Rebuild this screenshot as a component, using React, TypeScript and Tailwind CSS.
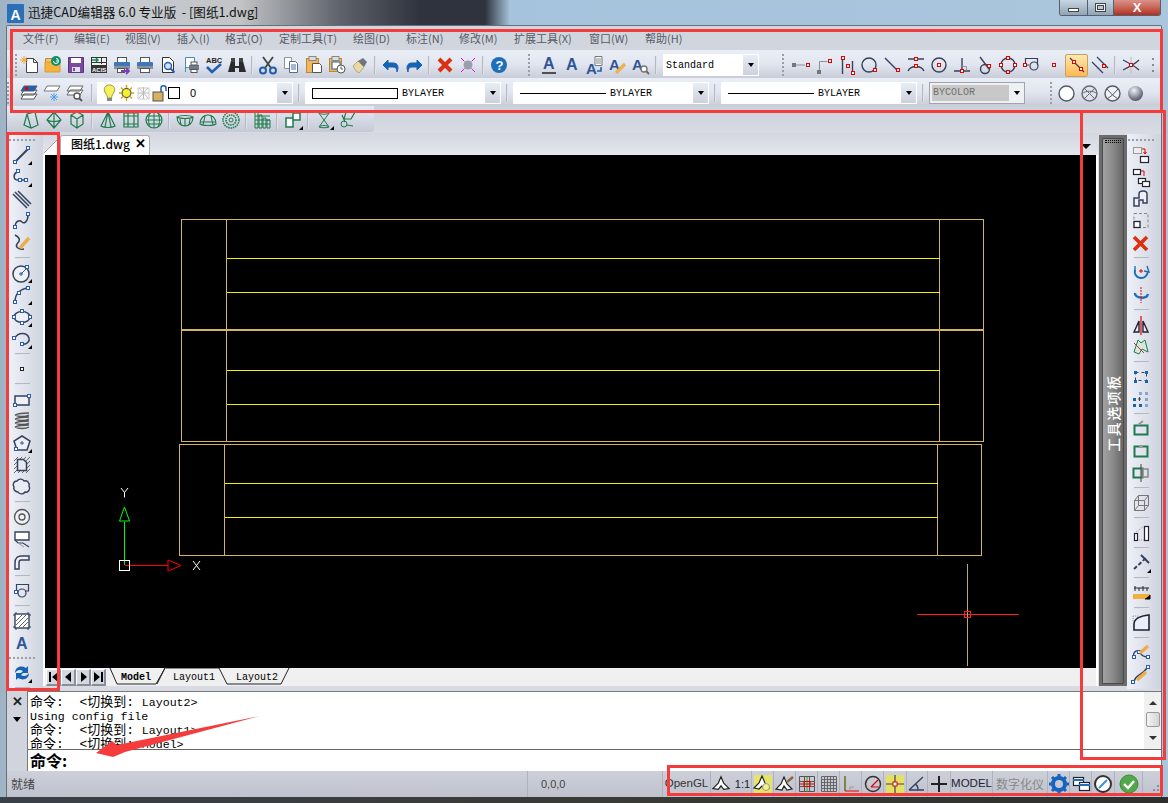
import type { ReactNode } from 'react';

const D = '#34425e';
const G = '#1f7a4d';
const R = '#e00000';
const B = '#2a5fa8';

// snap / grip node
const N = ({ x, y, c = R }: { x: number; y: number; c?: string }) => (
  <rect x={x + 0.5} y={y + 0.5} width="3" height="3" fill="#fff" stroke={c} />
);
const Fly = () => <path d="M20 16v4h-4z" fill="#000" />;

const A = ({ x = 4, y = 15, size = 15, c = '#2f5597' }: { x?: number; y?: number; size?: number; c?: string }) => (
  <text x={x} y={y} fontSize={size} fontWeight="700" fontFamily="'Liberation Sans', sans-serif" fill={c}>A</text>
);

const icons: Record<string, ReactNode> = {
  // standard toolbar
  new: (<><path d="M6.500 3.500h7l4 4v10h-11z" fill="#fff" stroke="#444" /><path d="M13.500 3.500v4h4" stroke="#444" /><path d="M4 1v8M0 5h8M1.500 2.500l5 5M6.500 2.500l-5 5" stroke="#f7a530" /></>),
  open: (<><path d="M2.500 3.500h7v4h-7z" fill="#f9c663" stroke="#c28a2c" /><path d="M2 7h15v10H2z" fill="#f7b23b" stroke="#d39b3f" /><circle cx="13" cy="6" r="5" fill="#0e8f6b" /><path d="M10.500 6a2.500 2.500 0 1 0 2.500-2.500M13 6l2 0" stroke="#fff" /></>),
  save: (<><path d="M2.500 2.500h15v15h-15z" fill="#7a4b9c" stroke="#5e3482" /><rect x="5" y="3" width="10" height="5" fill="#fff" /><rect x="6" y="12" width="8" height="5" fill="#e6dff0" /><rect x="7" y="13" width="2" height="3" fill="#7a4b9c" /></>),
  acis: (<><rect x="2.500" y="2.500" width="15" height="15" fill="#eef0ee" stroke="#333" /><path d="M2 7.500h15M12.500 2v7M7.500 2v6" stroke="#333" /><path d="M3 5h6M7 3l2 2-2 2" stroke="#138a55" strokeWidth="1.4" /><rect x="2" y="10" width="16" height="8" fill="#333" /><text x="3" y="16.500" fontSize="6" fontWeight="700" fill="#fff" fontFamily="'Liberation Sans', sans-serif">ACIS</text></>),
  printA: (<><rect x="5.500" y="2.500" width="9" height="5" fill="#fff" stroke="#555" /><rect x="2" y="7" width="16" height="7" rx="1" fill="#3f78b8" /><rect x="2" y="11" width="16" height="3" fill="#8a929e" /><rect x="5.500" y="13.500" width="7" height="4" fill="#fff" stroke="#555" /><path d="M9 16h8M14 13l3 3-3 3" stroke="#7a3fb0" strokeWidth="1.8" /></>),
  print: (<><rect x="5.500" y="2.500" width="9" height="5" fill="#fff" stroke="#555" /><rect x="2" y="7" width="16" height="7" rx="1" fill="#3f78b8" /><rect x="2" y="11" width="16" height="3" fill="#8a929e" /><rect x="5.500" y="13.500" width="9" height="4" fill="#fff" stroke="#555" /></>),
  preview: (<><path d="M4.500 2.500h7l4 4v11h-11z" fill="#fff" stroke="#333" /><circle cx="10" cy="11" r="3.500" fill="#cfe2f5" stroke="#2a5fa8" strokeWidth="1.4" /><path d="M12.500 13.500l4 4" stroke="#2a5fa8" strokeWidth="2" /></>),
  pageprint: (<><path d="M4.500 2.500h9v10h-9z" fill="#fff" stroke="#3f8fc0" /><path d="M4.500 6v11" stroke="#3f8fc0" /><rect x="8" y="10" width="10" height="5" fill="#6f7a8a" /><rect x="10" y="7" width="6" height="3" fill="#fff" stroke="#555" /><rect x="10" y="14.500" width="6" height="3" fill="#fff" stroke="#555" /></>),
  abc: (<><text x="2" y="8" fontSize="7.500" fontWeight="700" fill="#222" fontFamily="'Liberation Sans', sans-serif">ABC</text><path d="M3 12l5 5 9-8" stroke="#1f5fae" strokeWidth="2.600" /></>),
  binoc: (<><path d="M4 6h4v5h4V6h4l3 11h-7v-4H8v4H1z" fill="#2b2b2b" /><rect x="4" y="3" width="4" height="4" fill="#444" /><rect x="12" y="3" width="4" height="4" fill="#444" /></>),
  cut: (<><path d="M5 2l8 11M15 2L7 13" stroke="#444" strokeWidth="1.8" /><circle cx="5" cy="15.500" r="3" stroke="#1f5fae" strokeWidth="2" /><circle cx="15" cy="15.500" r="3" stroke="#1f5fae" strokeWidth="2" /></>),
  copy: (<><path d="M3.500 2.500h7v11h-7z" fill="#fff" stroke="#8a94a6" /><path d="M8.500 6.500h6l2 2v9h-8z" fill="#fff" stroke="#5a6a88" /><path d="M10 10h5M10 12h5M10 14h5" stroke="#3f70b0" /></>),
  paste: (<><rect x="2.500" y="3.500" width="12" height="14" fill="#f2b75a" stroke="#b8893a" /><rect x="5" y="1.500" width="7" height="4" fill="#ddd" stroke="#888" /><path d="M8.500 8.500h7l2 2v7h-9z" fill="#fff" stroke="#555" /></>),
  pastes: (<><rect x="2.500" y="3.500" width="12" height="13" fill="#f2b75a" stroke="#b8893a" /><rect x="5" y="1.500" width="7" height="4" fill="#ddd" stroke="#888" /><rect x="5" y="7" width="8" height="7" fill="#fff" stroke="#2a5fa8" /><circle cx="14" cy="14" r="4" fill="#fff" stroke="#555" /><path d="M14 11.500V14h2" stroke="#555" /></>),
  brush: (<><path d="M3 11l5-5 6 6-5 6-3-2z" fill="#e9d9a8" stroke="#b8a878" /><path d="M8 6l5-3 4 4-3 5z" fill="#6f7680" /></>),
  undo: (<path d="M7 5L2 10l5 5v-3h5c3 0 4 2 4 5 2-5 1-9-4-9H7z" fill="#1763b3" stroke="#1763b3" />),
  redo: (<path d="M13 5l5 5-5 5v-3H8c-3 0-4 2-4 5-2-5-1-9 4-9h5z" fill="#1763b3" stroke="#1763b3" />),
  del: (<path d="M4 4l12 12M16 4L4 16" stroke="#dd3010" strokeWidth="4" />),
  pink: (<><path d="M5 5l10 10M15 5L5 15" stroke="#f000f0" strokeDasharray="2 1" /><circle cx="10" cy="10" r="4.500" fill="#9aa0ab" /><path d="M3 3l2 2M17 3l-2 2M3 17l2-2M17 17l-2-2" stroke="#f000f0" /></>),
  help: (<><circle cx="10" cy="10" r="8" fill="#1f6fb8" /><text x="6.400" y="15" fontSize="13" fontWeight="700" fill="#fff" fontFamily="'Liberation Sans', sans-serif">?</text></>),
  // text toolbar
  t1: (<><A x={4} y={14} size={16} /><path d="M3 18h14" stroke="#222" strokeWidth="1.4" /></>),
  t2: (<A x={4} y={15} size={16} />),
  t3: (<><A x={1} y={19} size={15} /><path d="M10 1.500h7v9h-7z" fill="#fff" stroke="#777" /><path d="M11 4h5M11 6h5M11 8h5" stroke="#888" /><path d="M16 12v4h-4" stroke="#1f5fae" strokeWidth="1.600" /></>),
  t4: (<><A x={1} y={15} size={15} /><path d="M8 18l9-9" stroke="#eeb050" strokeWidth="3.400" /></>),
  t5: (<><A x={1} y={15} size={15} /><circle cx="13" cy="14" r="3" fill="#fff" stroke="#777" strokeWidth="1.4" /><path d="M15 16l3 3" stroke="#666" strokeWidth="1.8" /></>),
  // osnap toolbar
  s1: (<><path d="M3 10h11" stroke="#8a8f98" /><rect x="1" y="8" width="4" height="4" fill="#777" /><N x={15} y={8} /></>),
  s2: (<><path d="M5.500 16V6.500h8" stroke="#8a8f98" /><rect x="3" y="15" width="4" height="4" fill="#777" /><N x={14} y={4} /></>),
  s3: (<><path d="M5.500 4v15M15.500 6v13" stroke={D} strokeWidth="1.4" /><N x={4} y={1} /><N x={9} y={9} /><N x={14} y={16} /></>),
  s4: (<><circle cx="9" cy="10" r="7" stroke={D} strokeWidth="1.4" /><N x={13} y={13} /></>),
  s5: (<><path d="M2 3l12 12" stroke={D} strokeWidth="1.4" /><N x={13} y={13} /></>),
  s6: (<><path d="M2 4h16M2 16c3-6 13-6 16 0" stroke={D} strokeWidth="1.4" /><N x={8} y={2} /><N x={8} y={9} /></>),
  s7: (<><circle cx="10" cy="10" r="7" stroke={D} strokeWidth="1.4" /><N x={8} y={8} /></>),
  s8: (<><path d="M2 16h16M10 3v13" stroke={D} strokeWidth="1.4" /><path d="M10.500 11.500h4v4" stroke="#999" /><N x={8} y={14} /></>),
  s9: (<><path d="M5 2l9 12" stroke={D} strokeWidth="1.4" /><circle cx="10" cy="14" r="4.500" stroke={D} strokeWidth="1.4" /><N x={12} y={9} /></>),
  s10: (<><circle cx="10" cy="10" r="7" stroke={D} strokeWidth="1.4" /><N x={8} y={1} /><N x={8} y={15} /><N x={1} y={8} /><N x={15} y={8} /></>),
  s11: (<><path d="M4.500 10V3.500h12V10M4.500 10H8" stroke={D} strokeWidth="1.2" /><circle cx="13" cy="11" r="4" stroke={D} strokeWidth="1.2" /><N x={2} y={8} /></>),
  s12: (<N x={8} y={8} />),
  s13: (<><path d="M3 3l14 14" stroke={D} strokeWidth="1.2" /><N x={5} y={5} /><N x={12} y={12} /></>),
  s14: (<><path d="M2 7l11 11M7 2l11 11" stroke={D} strokeWidth="1.3" /><N x={12} y={9} /></>),
  s15: (<><path d="M2 5c4 2 12 6 16 10M2 15c4-2 12-6 16-10" stroke={D} strokeWidth="1.3" /><path d="M10 2v16" stroke="#bbb" /><N x={8} y={8} /></>),
  s16: (<path d="M9 3v2M9 9v2M9 15v2" stroke="#333" />),
  // layer buttons
  l1: (<><path d="M5 3h13l-3 5H2zM5 7h13l-3 5H2zM5 11h13l-3 5H2z" fill="#fff" stroke="#555" /><path d="M5 3h13l-3 5H2z" fill="#2a5fa8" /><rect x="6" y="4" width="3" height="3" fill={R} /></>),
  l2: (<><path d="M5 3h13l-3 5H2z" fill="#fff" stroke="#777" /><path d="M12 10v8M8 14h8M9 11l6 6M15 11l-6 6" stroke="#4fa0e8" /></>),
  l3: (<><path d="M5 3h13l-3 5H2zM5 7h13l-3 5H2z" fill="#fff" stroke="#666" /><circle cx="12" cy="13" r="3" fill="#fff" stroke="#555" strokeWidth="1.4" /><path d="M14 15l3 3" stroke="#555" strokeWidth="1.8" /></>),
  // 3d toolbar
  d1: (<path d="M3 15l3-11 8-2 3 13-7 3zM6 4l4 14" stroke={G} strokeWidth="1.2" />),
  d2: (<path d="M10 2l7 8-7 8-7-8zM3 10c3 2 11 2 14 0M10 2v16" stroke={G} strokeWidth="1.2" />),
  d3: (<path d="M10 2l6 3v9l-6 4-6-4V5zM4 5l6 4 6-4M10 9v9" stroke={G} strokeWidth="1.2" />),
  d4: (<path d="M10 2l7 14c-3 2-11 2-14 0zM10 2l-3 15M10 2l3 15" stroke={G} strokeWidth="1.2" />),
  d5: (<path d="M3 3h14v14H3zM3 6h14M3 14h14M7 3v14M13 3v14" stroke={G} strokeWidth="1.2" />),
  d6: (<><circle cx="10" cy="10" r="8" stroke={G} strokeWidth="1.2" /><path d="M2 10h16M3 6h14M3 14h14M10 2v16M6 3c-2 4-2 10 0 14M14 3c2 4 2 10 0 14" stroke={G} /></>),
  d7: (<path d="M2 7c3-2 13-2 16 0 0 6-4 9-8 9s-8-3-8-9zM2 7c3 2 13 2 16 0M6 15l-1-6M14 15l1-6M10 16V9" stroke={G} strokeWidth="1.1" />),
  d8: (<path d="M2 14c0-6 4-9 8-9s8 3 8 9c-3 2-13 2-16 0zM2 12h16M7 6l-2 9M13 6l2 9" stroke={G} strokeWidth="1.1" />),
  d9: (<><circle cx="10" cy="10" r="8" stroke={G} strokeWidth="1.6" strokeDasharray="1.5 0.8" /><circle cx="10" cy="10" r="5" stroke={G} strokeWidth="1.6" strokeDasharray="1.5 0.8" /><circle cx="10" cy="10" r="2" stroke={G} /></>),
  d10: (<path d="M3 2h3v16H3zM7 5h3v13H7zM11 8h3v10h-3zM15 10h3v8h-3zM3 6h15M3 10h15M3 14h15" stroke={G} />),
  d11: (<><path d="M3 8h7v9H3zM10 3h7v7h-7z" fill="#fff" stroke={G} strokeWidth="1.5" /><Fly /></>),
  d12: (<><path d="M4 2c2 3 10 3 12 0M4 2c2-1 10-1 12 0M5 17c2-2 8-2 10 0M5 17c2 1 8 1 10 0M4 2l6 8 6-8M5 17l5-7 5 7" stroke={G} /><Fly /></>),
  d13: (<><path d="M9 2h9l-4 7H7zM5 5l3 7" stroke={G} strokeWidth="1.2" /><circle cx="7" cy="14" r="3" stroke={G} /><path d="M10 15l6 1" stroke={G} /></>),
  // draw toolbar
  line: (<><path d="M3 17L16 4" stroke={D} strokeWidth="2" /><N x={1} y={15} c={B} /><N x={14} y={1} c={B} /><Fly /></>),
  pline: (<><path d="M5 5C1 7 1 13 6 13h9" stroke={D} strokeWidth="1.5" /><N x={4} y={2} c={B} /><N x={6} y={11} c={B} /><N x={12} y={11} c={B} /><Fly /></>),
  mline: (<path d="M3 3l14 14M6 2l13 13M1 5l14 14" stroke={D} strokeWidth="1.5" />),
  spline: (<><path d="M3 17c0-8 5-8 7-6s6 0 6-7" stroke={D} strokeWidth="1.5" /><N x={1} y={14} c={B} /><N x={14} y={1} c={B} /></>),
  sketch: (<><path d="M3 2c6 3 5 6 2 9-2 3 2 6 7 5" stroke={D} strokeWidth="1.5" /><path d="M8 15l9-10" stroke="#eeac4c" strokeWidth="3.400" /></>),
  circle: (<><circle cx="9" cy="11" r="8" fill="#eef0f5" stroke={D} strokeWidth="1.5" /><path d="M9 11l6-6" stroke={B} /><path d="M7 11h4M9 9v4" stroke={B} /><N x={13} y={2} c={B} /><Fly /></>),
  arc: (<><path d="M3 17C3 9 8 4 16 3" stroke={D} strokeWidth="1.5" /><N x={1} y={15} c={B} /><N x={5} y={6} c={B} /><N x={14} y={1} c={B} /><Fly /></>),
  ellipse: (<><ellipse cx="10" cy="10" rx="8" ry="5.500" fill="#eef0f5" stroke={D} strokeWidth="1.5" /><N x={8} y={2} c={B} /><N x={0} y={8} c={B} /><N x={16} y={8} c={B} /><N x={8} y={14} c={B} /><Fly /></>),
  earc: (<><path d="M3 9c3-6 12-6 14 0 1 3-2 7-7 6" stroke={D} strokeWidth="1.5" /><N x={0} y={7} c={B} /><N x={8} y={13} c={B} /><Fly /></>),
  point: (<rect x="8.500" y="8.500" width="3" height="3" fill="#fff" stroke="#222" strokeWidth="1" />),
  rect: (<><path d="M3 7h14v9H3z" fill="#eef0f5" stroke={D} strokeWidth="1.5" /><N x={1} y={14} c={B} /><N x={15} y={5} c={B} /></>),
  helix: (<path d="M3 4c4-2 11-2 14-2M3 4c3 2 11 2 14 0M3 8c4-2 11-2 14-2M3 8c3 2 11 2 14 0M3 12c4-2 11-2 14-2M3 12c3 2 11 2 14 0M3 16c4-2 11-2 14-2M3 16c3 2 11 2 14 0" stroke="#555" strokeWidth="1.3" />),
  poly: (<><path d="M10 3l8 5-3 9H5L2 8z" fill="#eef0f5" stroke={D} strokeWidth="1.5" /><path d="M8 10h4M10 8v4" stroke={B} /><N x={2} y={14} c={B} /><Fly /></>),
  hatchb: (<><path d="M2 6l4-4M2 10l8-8M2 14L14 2M2 18L18 2M6 18L18 6M10 18l8-8M14 18l4-4" stroke="#666" /><path d="M5.500 4.500h6l3 3v8h-9z" fill="#e6e9f2" stroke={D} strokeWidth="1.5" /></>),
  cloud: (<path d="M5 4c2-3 6-2 7 0 3-1 6 2 5 5 2 3-1 7-4 6-2 3-6 2-7 0-3 0-5-3-4-5-2-3 0-6 3-6z" fill="#e8ecf4" stroke={D} strokeWidth="1.4" />),
  donut: (<><circle cx="10" cy="10" r="7.500" fill="#eef0f5" stroke="#555" strokeWidth="1.3" /><circle cx="10" cy="10" r="3" stroke="#555" strokeWidth="1.3" /></>),
  leader: (<><path d="M3 3h14v8H3z" fill="#fff" stroke={D} strokeWidth="1.4" /><path d="M3 11l3 3h5l6 4" stroke={D} strokeWidth="1.2" /><path d="M6 14l6 4" stroke="#999" /></>),
  wall: (<path d="M3 18v-6c0-5 3-7 6-7h8v4H9c-1 0-2 1-2 3v6z" fill="#eef0f5" stroke={D} strokeWidth="1.5" />),
  region: (<><path d="M4.500 9V3.500h12V10H13" stroke={D} strokeWidth="1.2" /><circle cx="10" cy="12" r="4" stroke={D} strokeWidth="1.2" /><N x={2} y={9} c={B} /></>),
  hatch: (<><rect x="3" y="3" width="14" height="14" fill="#fff" stroke={D} strokeWidth="1.4" /><path d="M1 4h2M17 4h2M1 16h2M17 16h2M4 1v2M16 1v2M4 17v2M16 17v2" stroke={D} /><path d="M4 14L14 4M4 10l6-6M7 16l9-9M11 16l5-5" stroke="#666" /></>),
  atext: (<A x={4} y={16} size={16} />),
  sync: (<><path d="M3 10c0-6 6-8 11-5l2-2v7h-7l2-2c-3-2-6-1-8 2zM17 10c0 6-6 8-11 5l-2 2v-7h7l-2 2c3 2 6 1 8-2z" fill="#1763b3" /><Fly /></>),
  // modify toolbar
  m1: (<><rect x="2.500" y="2.500" width="8" height="6" fill="#eee" stroke="#999" /><rect x="9.500" y="11.500" width="8" height="6" fill="#fff" stroke="#223" strokeWidth="1.2" /><path d="M11 4h3v5M12.500 7l1.500 2 1.500-2" stroke={R} /></>),
  m2: (<><rect x="2.500" y="2.500" width="7" height="5" fill="#fff" stroke="#223" strokeWidth="1.2" /><rect x="7.500" y="11.500" width="7" height="5" fill="#fff" stroke="#223" strokeWidth="1.2" /><rect x="11.500" y="14.500" width="7" height="5" fill="#fff" stroke="#223" strokeWidth="1.2" /><path d="M10 4h3v5" stroke={R} /></>),
  m3: (<path d="M3 17V9h5V5c0-4 8-4 8 0v9h-4v-3H8v6z" fill="#eef0f5" stroke={D} strokeWidth="1.5" />),
  m4: (<><rect x="3" y="2.500" width="14" height="14" stroke="#888" strokeDasharray="3 2" /><rect x="3" y="10.500" width="6" height="6" fill="#fff" stroke="#223" strokeWidth="1.3" /></>),
  m5: (<path d="M3 4l13 13M16 4L3 17" stroke="#dd3010" strokeWidth="3.600" />),
  m6: (<><path d="M4 7c-2 8 10 12 13 2" stroke="#1f6fb8" strokeWidth="2" /><path d="M4 3v5M16 3l2 6-5-1" stroke="#1f6fb8" strokeWidth="1.4" /><path d="M8 8h4M10 6v4" stroke={R} /></>),
  m7: (<><path d="M4 8c-1 5 12 7 13 1" stroke="#1f6fb8" strokeWidth="2.400" /><path d="M10 2v16" stroke={R} strokeDasharray="2 1" /></>),
  m8: (<><path d="M3 17L8 6v11zM17 17l-5-11v11z" fill="#eef0f5" stroke="#223" strokeWidth="1.4" /><path d="M10 1v19" stroke={R} strokeWidth="1.2" /></>),
  m9: (<><path d="M3 15L7 3l3 3 4-3 3 12-6-3-3 5z" fill="#d8e8dc" stroke={G} /><path d="M3 6l10 10" stroke="#c03040" /></>),
  m10: (<><rect x="4.500" y="5.500" width="11" height="8" stroke="#444" strokeDasharray="3 3" /><rect x="3" y="4" width="3" height="3" fill="#1763b3" /><rect x="14" y="4" width="3" height="3" fill="#1763b3" /><rect x="3" y="13" width="3" height="3" fill="#1763b3" /><rect x="14" y="13" width="3" height="3" fill="#1763b3" /></>),
  m11: (<><rect x="2" y="9" width="3" height="3" fill="#1763b3" /><rect x="8" y="3" width="3" height="3" fill="#7fa8d8" /><rect x="14" y="3" width="3" height="3" fill="#7fa8d8" /><rect x="2" y="15" width="3" height="3" fill="#1763b3" /><rect x="8" y="15" width="3" height="3" fill="#1763b3" /><rect x="14" y="9" width="3" height="3" fill="#7fa8d8" /><rect x="14" y="15" width="3" height="3" fill="#7fa8d8" /><path d="M7 10h3M8.500 8v4" stroke="#444" /></>),
  m12: (<><rect x="3.500" y="6.500" width="13" height="9" stroke={G} strokeWidth="2" /><path d="M7 6l5-4" stroke="#999" strokeWidth="2" /></>),
  m13: (<><rect x="3.500" y="5.500" width="13" height="10" stroke={G} strokeWidth="2" /><rect x="8" y="4" width="4" height="3" fill="#999" /></>),
  m14: (<><rect x="2.500" y="5.500" width="9" height="9" stroke={G} strokeWidth="2" /><rect x="11" y="6" width="6" height="8" stroke="#888" strokeWidth="1.5" /><path d="M10 1v18" stroke="#444" /></>),
  m15: (<path d="M3.500 7.500h10v10h-10zM7.500 2.500h10v10h-10zM3.500 7.500l4-5M13.500 7.500l4-5M13.500 17.500l4-5M3.500 17.500l4-5" stroke="#777" />),
  m16: (<><rect x="3.500" y="10.500" width="3" height="7" fill="#fff" stroke="#223" strokeWidth="1.2" /><rect x="13.500" y="3.500" width="4" height="14" fill="#fff" stroke="#223" strokeWidth="1.2" /><path d="M5 9l8-6" stroke="#999" strokeDasharray="1 1" /><path d="M8 17h5" stroke="#999" strokeDasharray="1 1" /></>),
  m17: (<><path d="M3 16L16 4" stroke={D} strokeWidth="2" strokeDasharray="4 2" /><path d="M10 2l8 8" stroke={D} strokeWidth="2" /><Fly /></>),
  m18: (<><path d="M4 3v5M8 5v3M12 3v5M16 5v3M3 5h15" stroke="#223" /><rect x="2" y="11" width="17" height="5" fill="#f0b040" /><path d="M14 16h5v-4" fill="#000" stroke="#000" /></>),
  m19: (<><path d="M3 17V11C3 6 9 3 18 2v15z" fill="#e8f1fa" stroke="#223" strokeWidth="1.600" /><path d="M2 3h6M2 3v6" stroke="#999" strokeDasharray="1 1" /></>),
  m20: (<><path d="M3 14C1 8 8 6 9 9c1 3 3 5 8 5" stroke={D} strokeWidth="1.3" /><N x={1} y={12} c={B} /><N x={6} y={7} c={B} /><N x={15} y={12} c={B} /><path d="M9 10l8-7" stroke="#eeac4c" strokeWidth="3.400" /></>),
  m21: (<><path d="M3 17C4 9 11 11 16 3" stroke={D} strokeWidth="1.5" /><N x={0} y={15} c={B} /><N x={15} y={0} c={B} /><path d="M6 15l9-8" stroke="#eeac4c" strokeWidth="3.400" /></>),
  // status bar
  ucs: (<path d="M10 2l3 7 6 6-6 1-3-4-3 4-6-1 6-6z" fill="#fff" stroke="#222" strokeWidth="1.3" />),
  ucsL: (<><rect x="1" y="1" width="18" height="18" fill="#e4e46a" /><path d="M9 2l3 7 4 5-5 1-2-3-3 3-5-1 5-5z" fill="#fff" stroke="#222" strokeWidth="1.2" /><circle cx="13" cy="13" r="3.500" fill="#f6f08a" stroke="#999" /></>),
  ucsP: (<><path d="M9 3l3 7 5 5-5 1-3-4-2 4-6-1 5-5z" fill="#fff" stroke="#222" strokeWidth="1.2" /><path d="M12 8l6-5" stroke="#8a6a3a" strokeWidth="2.400" /></>),
  snapg: (<><path d="M2.500 2.500h15v15h-15zM2.500 7.500h15M2.500 12.500h15M7.500 2.500v15M12.500 2.500v15" stroke="#555" /><path d="M10 3v15" stroke="#2a2" /><path d="M2 10h16" stroke={R} /><rect x="7" y="7.500" width="6" height="5" stroke={R} /></>),
  grid: (<path d="M2.500 2.500h15v15h-15zM2.500 5.500h15M2.500 8.500h15M2.500 11.500h15M2.500 14.500h15M5.500 2.500v15M8.500 2.500v15M11.500 2.500v15M14.500 2.500v15" stroke="#666" />),
  ortho: (<><path d="M4 2v15h14" stroke={R} /><path d="M4 2v15" stroke="#2a2" /><path d="M9 13v4M9 13h4" stroke="#999" /></>),
  polar: (<><circle cx="10" cy="10" r="7.500" stroke="#333" strokeWidth="1.5" /><path d="M8 13l7-7M8 13h8" stroke={R} strokeWidth="1.2" /></>),
  otrack: (<><rect x="1" y="1" width="18" height="18" fill="#e3e064" /><path d="M1 10h18M10 1v18" stroke={D} strokeWidth="1.2" /><rect x="8" y="8" width="4" height="4" fill="#fff" stroke={R} /></>),
  angle: (<path d="M2 16L16 3M2 16h15M8 10c2 1 3 3 3 6" stroke={D} strokeWidth="1.4" />),
  cross: (<path d="M2 10h16M10 2v16" stroke="#222" strokeWidth="2" />),
  gear: (<><circle cx="10" cy="10" r="6" stroke="#1565c0" strokeWidth="4" /><path d="M10 0v4M10 16v4M0 10h4M16 10h4M3 3l3 3M14 14l3 3M17 3l-3 3M6 14l-3 3" stroke="#1565c0" strokeWidth="3" /></>),
  panes: (<><rect x="2.500" y="3.500" width="10" height="8" fill="#fff" stroke="#223" strokeWidth="1.2" /><rect x="8.500" y="8.500" width="10" height="8" fill="#fff" stroke="#223" strokeWidth="1.2" /><path d="M2 6h11M8 11h11" stroke="#1f6fb8" strokeWidth="2" /></>),
  compass: (<><circle cx="10" cy="10" r="8" fill="#fff" stroke="#333" strokeWidth="2" /><path d="M6 14l8-8" stroke="#3a8fe0" strokeWidth="2" /></>),
  ok: (<><circle cx="10" cy="10" r="9" fill="#52a84a" stroke="#3e8a3a" /><path d="M5 10l4 4 6-7" stroke="#fff" strokeWidth="2.400" /></>),
};

const Icon = ({ name, size = 20 }: { name: string; size?: number }) => (
  <svg width={size} height={size} viewBox="0 0 20 20" fill="none" className="block overflow-visible">
    {icons[name]}
  </svg>
);

const Btn = ({ name, active }: { name: string; active?: boolean }) => (
  <div
    className={
      active
        ? 'w-[23px] h-[23px] shrink-0 flex items-center justify-center rounded-[2px] border border-[#c8a060] bg-gradient-to-b from-[#ffe9b0] to-[#ffb84f]'
        : 'w-[23px] h-[23px] shrink-0 flex items-center justify-center'
    }
  >
    <Icon name={name} />
  </div>
);

const Sep = () => <div className="w-[8px] h-[18px] shrink-0 flex justify-center"><div className="w-[2px] h-full bg-[#b4b8c4] border-r border-white/60" /></div>;
const ComboSep = () => <div className="w-[12px] h-[18px] shrink-0 flex justify-center"><div className="w-[2px] h-full bg-[#b4b8c4] border-r border-white/60" /></div>;
const Grip = () => <div className="w-[3px] h-[22px] shrink-0 border-l-2 border-dotted border-[#9a9ea8]" />;
const Caret = () => <div className="w-0 h-0 border-x-[3.5px] border-x-transparent border-t-[4px] border-t-black" />;

const DropBtn = () => (
  <div className="w-[15px] h-full shrink-0 flex items-center justify-center bg-gradient-to-b from-[#e9edf5] to-[#cdd1dc]"><Caret /></div>
);

const Combo = ({ children }: { children: ReactNode }) => (
  <div className="w-[196px] h-[22px] shrink-0 flex items-center bg-white border border-white">
    <div className="flex-1 min-w-0 h-full flex items-center">{children}</div>
    <DropBtn />
  </div>
);

const mono = "font-['Liberation_Mono',monospace] text-[10px] text-black";
const cjk = "font-['Noto_Sans_CJK_SC','Noto_Sans',sans-serif]";
const sans = "font-['Liberation_Sans',sans-serif]";

const LineCombo = () => (
  <Combo>
    <div className="w-[86px] h-px bg-black ml-[6px]" />
    <span className={`${mono} ml-[4px]`}>BYLAYER</span>
  </Combo>
);

const menus = [
  ['文件(F)', 'w-[51px]'], ['编辑(E)', 'w-[51px]'], ['视图(V)', 'w-[52px]'], ['插入(I)', 'w-[48px]'],
  ['格式(O)', 'w-[54px]'], ['定制工具(T)', 'w-[74px]'], ['绘图(D)', 'w-[53px]'], ['标注(N)', 'w-[53px]'],
  ['修改(M)', 'w-[55px]'], ['扩展工具(X)', 'w-[75px]'], ['窗口(W)', 'w-[56px]'], ['帮助(H)', 'w-[50px]'],
];

const drawTools: (string | null)[] = ['line', 'pline', 'mline', 'spline', 'sketch', null, 'circle', 'arc', 'ellipse', 'earc', null, 'point', null, 'rect', 'helix', 'poly', 'hatchb', 'cloud', null, 'donut', 'leader', 'wall', null, 'region', null, 'hatch', 'atext'];
const modifyTools: (string | null)[] = ['m1', 'm2', 'm3', 'm4', 'm5', null, 'm6', 'm7', null, 'm8', 'm9', null, 'm10', 'm11', null, 'm12', 'm13', 'm14', null, 'm15', null, 'm16', null, 'm17', null, 'm18', null, 'm19', null, 'm20', 'm21'];

const VGrip = () => <div className="h-[8px] shrink-0 flex items-center"><div className="w-[26px] border-t-2 border-dotted border-[#9a9ea8]" /></div>;
const VSep = () => <div className="h-[8px] w-full shrink-0 flex items-center justify-center"><div className="w-[15px] h-[2px] bg-[#b4b8c4] border-b border-white/60" /></div>;
const VBtn = ({ name }: { name: string }) => <div className="h-[22px] shrink-0 flex items-center justify-center"><Icon name={name} /></div>;

const VToolbar = ({ tools }: { tools: (string | null)[] }) => (
  <>
    {tools.map((t, i) => (t ? <VBtn key={i} name={t} /> : <VSep key={i} />))}
  </>
);

const NavBtn = ({ d }: { d: string }) => (
  <div className="w-[15px] h-[17px] shrink-0 flex items-center justify-center bg-[#d4d8e0] border-r-2 border-b-2 border-[#8a8e98] border-l border-t border-l-white border-t-white">
    <svg width="9" height="10" viewBox="0 0 9 10"><path d={d} fill="#000" /></svg>
  </div>
);

const Cell = ({ w, children }: { w: string; children: ReactNode }) => (
  <div className={`${w} h-full shrink-0 flex items-center justify-center border-r border-[#aeb2bc]`}>{children}</div>
);

function Drawing() {
  return (
    <svg viewBox="45 155 1051 513" width="1051" height="513" className="block" shapeRendering="crispEdges" fill="none">
      <g stroke="#d4b464">
        <path d="M181.500 219.500h802v110h-802zM226.500 219.500v222M939.500 219.500v222M181.500 330.500h802v111h-802z" />
        <path d="M179.500 444.500h802v111h-802zM224.500 444.500v111M937.500 444.500v111" />
      </g>
      <path d="M226.500 258.500h713M226.500 292.500h713M226.500 370.500h713M226.500 404.500h713M224.500 483.500h713M224.500 517.500h713" stroke="#f4f000" />
      {/* UCS icon */}
      <path d="M124.500 522v43" stroke="#00ff00" />
      <path d="M124.500 507l-5 14h10z" stroke="#00ff00" shapeRendering="auto" />
      <path d="M125 565.500h43" stroke="#ff0000" />
      <path d="M168 560v11l13-5.500z" stroke="#ff0000" shapeRendering="auto" />
      <rect x="119.500" y="560.500" width="10" height="10" stroke="#fff" />
      <path d="M121 488l3.500 4.500 3.500-4.500M124.500 492.500v5M193 561l7 9M200 561l-7 9" stroke="#fff" shapeRendering="auto" />
      {/* crosshair */}
      <path d="M917 614.500h102" stroke="#ff2020" />
      <path d="M967.500 564v102" stroke="#b8a878" />
      <rect x="964.500" y="611.500" width="6" height="6" stroke="#ff2020" />
    </svg>
  );
}

const CmdLine = ({ to }: { to: string }) => (
  <div className="h-[14px]">
    <span className="text-[13px]">命令:  &lt;切换到: </span>{to}&gt;
  </div>
);

export default function App() {
  return (
    <div className={`relative w-[1168px] h-[803px] overflow-hidden flex flex-col ${cjk} bg-[linear-gradient(90deg,#9fb3c4_0,#c6ccd2_100px,#c2c4c6_240px,#5e626a_340px,#2f333d_420px,#2f333d_485px,#a5c3dc_510px,#a9c6dc_1168px)]`}>
      {/* title bar */}
      <div className="h-[25px] shrink-0 flex items-start pl-[7px]">
        <div className="w-[17px] h-[19px] mt-[4px] shrink-0 flex items-end justify-center rounded-[1px] bg-[#2a6fb8]">
          <span className={`${sans} text-[14px] leading-[15px] font-bold text-white`}>A</span>
        </div>
        <span className="ml-[4px] mt-[3px] text-[12.6px] leading-[18px] text-[#111] whitespace-pre">迅捷CAD编辑器 6.0 专业版  - [图纸1.dwg]</span>
        <div className="ml-auto mr-[7px] h-[16px] flex rounded-b-[3px] border border-t-0 border-[#55606c] overflow-hidden">
          <div className="w-[28px] flex items-end justify-center pb-[3px] bg-gradient-to-b from-[#c8d6e2] to-[#8fa4b6] border-r border-[#55606c]"><div className="w-[11px] h-[4px] bg-white border border-[#444]" /></div>
          <div className="w-[26px] flex items-center justify-center bg-gradient-to-b from-[#c8d6e2] to-[#8fa4b6] border-r border-[#55606c]"><div className="w-[11px] h-[9px] bg-white/80 border border-[#444] p-[1px]"><div className="w-full h-full border border-[#444] bg-[#b8c8d4]" /></div></div>
          <div className={`w-[46px] flex items-center justify-center bg-gradient-to-b from-[#d9928a] to-[#b03020] text-white font-bold text-[13px] leading-[14px] ${sans}`}>X</div>
        </div>
      </div>

      {/* window */}
      <div className="flex-1 min-h-0 mx-[6px] flex flex-col overflow-hidden border border-b-0 border-[#66707c] rounded-t-[2px] bg-[#d0d4dd]">
        {/* menu */}
        <div className="h-[24px] shrink-0 flex items-center pl-[16px] text-[11px] text-[#555a66] bg-[#d1d5de]">
          {menus.map(([m, w]) => (
            <span key={m} className={`${w} shrink-0 whitespace-nowrap`}>{m}</span>
          ))}
        </div>

        {/* standard toolbars */}
        <div className="h-[28px] pt-[2px] shrink-0 flex items-center overflow-hidden bg-gradient-to-b from-[#e9eef7] via-[#e2e6f0] to-[#c9cdd9]">
          <div className="w-[11px] shrink-0 flex justify-end"><Grip /></div>
          <Btn name="new" /><Btn name="open" /><Btn name="save" /><Btn name="acis" /><Btn name="printA" /><Btn name="print" /><Btn name="preview" /><Btn name="pageprint" /><Btn name="abc" /><Btn name="binoc" />
          <Sep />
          <Btn name="cut" /><Btn name="copy" /><Btn name="paste" /><Btn name="pastes" /><Btn name="brush" />
          <Sep />
          <Btn name="undo" /><Btn name="redo" />
          <Sep />
          <Btn name="del" /><Btn name="pink" />
          <Sep />
          <Btn name="help" />
          <div className="w-[18px] shrink-0" />
          <div className="w-[9px] shrink-0"><Grip /></div>
          <Btn name="t1" /><Btn name="t2" /><Btn name="t3" /><Btn name="t4" /><Btn name="t5" />
          <Sep />
          <div className="w-[96px] h-[22px] ml-[3px] shrink-0 flex items-center bg-white border border-white">
            <span className={`${mono} flex-1 pl-[2px]`}>Standard</span>
            <DropBtn />
          </div>
          <div className="w-[23px] shrink-0" />
          <div className="w-[7px] shrink-0"><Grip /></div>
          {['s1', 's2', 's3', 's4', 's5', 's6', 's7', 's8', 's9', 's10', 's11', 's12'].map((s) => <Btn key={s} name={s} />)}
          <Btn name="s13" active /><Btn name="s14" />
          <Sep />
          <Btn name="s15" /><Btn name="s16" />
        </div>

        {/* layer / property toolbar */}
        <div className="h-[28px] pt-[2px] shrink-0 flex items-center overflow-hidden bg-gradient-to-b from-[#e9eef7] via-[#e2e6f0] to-[#c9cdd9]">
          <div className="w-[10px] shrink-0"><Grip /></div>
          <Btn name="l1" /><Btn name="l2" /><Btn name="l3" />
          <div className="w-[11px] h-[18px] shrink-0 flex justify-center"><div className="w-[2px] h-full bg-[#b4b8c4] border-r border-white/60" /></div>
          <Combo>
            <div className="ml-[3px] flex items-center">
              <svg width="17" height="18" viewBox="0 0 17 18" className="block"><path d="M8.500 1c4 0 6 3 5 6s-3 4-3 7h-4c0-3-2-4-3-7s1-6 5-6z" fill="#f6f060" stroke="#9a9a40" /><rect x="6" y="14" width="5" height="3" fill="#888" /></svg>
              <svg width="17" height="18" viewBox="0 0 17 18" className="block"><circle cx="8.500" cy="9" r="4.500" fill="#f4f030" stroke="#333" /><path d="M8.500 1v3M8.500 14v3M1 9h3M13 9h3M3 3.500l2 2M12 12.500l2 2M14 3.500l-2 2M5 12.500l-2 2" stroke="#d0a020" strokeWidth="1.5" /></svg>
              <svg width="17" height="18" viewBox="0 0 17 18" className="block"><rect x="3" y="4" width="11" height="11" fill="#fff" stroke="#ccc" /><path d="M8.500 3v12M3 9h11M4 4l9 10M13 4l-9 10" stroke="#bbb" /></svg>
              <svg width="17" height="18" viewBox="0 0 17 18" className="block"><rect x="1" y="8" width="10" height="9" fill="#d8b060" stroke="#555" /><path d="M9 8V4c0-3 5-3 5 0v3" stroke="#1f5fae" strokeWidth="1.5" fill="none" /></svg>
              <div className="w-[12px] h-[12px] border border-black bg-white ml-[-1px]" />
            </div>
            <span className={`${sans} ml-[10px] text-[11px] text-black`}>0</span>
          </Combo>
          <ComboSep />
          <Combo>
            <div className="w-[86px] h-[11px] ml-[6px] border border-black" />
            <span className={`${mono} ml-[4px]`}>BYLAYER</span>
          </Combo>
          <ComboSep />
          <LineCombo />
          <ComboSep />
          <LineCombo />
          <ComboSep />
          <div className="w-[96px] h-[22px] shrink-0 flex items-center bg-[#eef0f4] border border-[#a0a4ac] pl-[2px]">
            <span className={`${mono} flex-1 h-[16px] leading-[16px] bg-[#c8c8c8] !text-[#707070] pl-[1px]`}>BYCOLOR</span>
            <div className="w-[15px] shrink-0 flex items-center justify-center"><Caret /></div>
          </div>
          <div className="w-[25px] shrink-0" />
          <div className="w-[5px] shrink-0"><Grip /></div>
          <div className="flex items-center">
            <svg width="23" height="23" viewBox="0 0 23 23" className="block"><circle cx="11.500" cy="11.500" r="7.500" fill="#fff" stroke="#555a66" strokeWidth="1.4" /></svg>
            <svg width="23" height="23" viewBox="0 0 23 23" className="block"><circle cx="11.500" cy="11.500" r="7.500" fill="#dfe3ea" stroke="#666c78" strokeWidth="1.4" /><path d="M6 6l11 11M17 6L6 17M4 11.500c4-3 11-3 15 0" stroke="#666c78" fill="none" /></svg>
            <svg width="23" height="23" viewBox="0 0 23 23" className="block"><circle cx="11.500" cy="11.500" r="7.500" fill="#f0f2f6" stroke="#555a66" strokeWidth="1.4" /><path d="M6 7l5.500 6L17 7M11.500 13L6 17M11.500 13l5.500 4" stroke="#555a66" fill="none" /></svg>
            <div className="w-[15px] h-[15px] mx-[4px] rounded-full bg-[radial-gradient(circle_at_40%_30%,#f0f2f6,#5a6374_70%,#3a4252)]" />
          </div>
        </div>

        {/* 3D toolbar */}
        <div className="h-[27px] shrink-0 bg-gradient-to-b from-[#cdd1da] to-[#d8dbe4] flex items-start">
          <div className="w-[367px] h-[26px] pt-[2px] shrink-0 flex items-center pl-[12px] rounded-br-[3px] bg-gradient-to-b from-[#e6eaf3] to-[#c6cad6]">
            <Btn name="d1" /><Btn name="d2" /><Btn name="d3" />
            <Sep />
            <Btn name="d4" /><Btn name="d5" /><Btn name="d6" />
            <Sep />
            <Btn name="d7" /><Btn name="d8" /><Btn name="d9" />
            <Sep />
            <Btn name="d10" />
            <Sep />
            <Btn name="d11" />
            <Sep />
            <Btn name="d12" /><Btn name="d13" />
          </div>
        </div>

        {/* main */}
        <div className="h-[558px] shrink-0 flex bg-[#d8dbe4]">
          {/* draw toolbar */}
          <div className="ml-[2px] w-[34px] h-[555px] pr-[8px] shrink-0 flex flex-col items-center bg-gradient-to-r from-[#eef1f8] to-[#cfd3de]">
            <div className="h-[3px] shrink-0" />
            <VGrip />
            <VToolbar tools={drawTools} />
            <VGrip />
            <VBtn name="sync" />
            <VSep />
          </div>

          {/* drawing area */}
          <div className="w-[1055px] shrink-0 flex flex-col">
            <div className="h-[22px] shrink-0 flex items-end bg-gradient-to-b from-[#d4d7e0] to-[#e4e6ec] pl-[1px]">
              <div className="w-[16px] h-[20px] shrink-0 bg-[linear-gradient(135deg,transparent_48%,#9a9ea8_50%,#fff_52%)]" />
              <div className="w-[90px] h-[20px] pb-[4px] shrink-0 flex items-center pl-[10px] rounded-t-[3px] bg-white border border-b-0 border-[#a8acb6]">
                <span className="text-[12px] leading-[16px] font-medium text-black">图纸1.dwg</span>
                <span className={`${sans} ml-auto mr-[3px] text-[13px] leading-[14px] font-bold text-black`}>✕</span>
              </div>
              <div className="ml-auto mr-[7px] mb-[6px] w-0 h-0 border-x-[5px] border-x-transparent border-t-[5px] border-t-black" />
            </div>
            <div className="h-[513px] shrink-0 border-x-2 border-white box-content w-[1051px] bg-black">
              <Drawing />
            </div>
            <div className="relative h-[18px] shrink-0 flex items-center bg-[#f0f0f0] border-x-2 border-white box-content w-[1051px]">
              <div className="flex ml-[1px]">
                <NavBtn d="M0 0h2v10H0zM9 0v10L3 5z" />
                <NavBtn d="M7 0v10L1 5z" />
                <NavBtn d="M2 0v10l6-5z" />
                <NavBtn d="M0 0v10l6-5zM7 0h2v10H7z" />
              </div>
              <span className={`${mono} ml-[15px] font-bold`}>Model</span>
              <span className={`${mono} ml-[22px]`}>Layout1</span>
              <span className={`${mono} ml-[21px]`}>Layout2</span>
              <svg width="200" height="18" viewBox="0 0 200 18" fill="none" className="absolute left-[63px] top-0">
                <path d="M2 0l7 16h39l9-16M58 0h53l8 16h54l8-16M49 16l8-16" stroke="#222" />
              </svg>
            </div>
          </div>

          {/* tool palette */}
          <div className="ml-[1px] mt-[2px] w-[28px] h-[551px] shrink-0 bg-[#6c6c6c] p-[3px] pb-[2px]">
            <div className="h-full flex flex-col items-center border border-[#4a4a4a] rounded-t-[2px] bg-gradient-to-r from-[#a2a2a2] via-[#8a8a8a] to-[#666]">
              <div className="w-[16px] h-[3px] mt-[1px] border-y border-dotted border-black" />
              <div className="flex-1 flex items-center justify-center">
                <span className="-rotate-90 whitespace-nowrap text-[14px] leading-[14px] tracking-[1.500px] font-medium text-white">工具选项板</span>
              </div>
            </div>
          </div>

          {/* modify toolbar */}
          <div className="w-[34px] h-[555px] mt-[1px] pr-[6px] shrink-0 flex flex-col items-center bg-gradient-to-r from-[#eef1f8] to-[#cfd3de]">
            <div className="h-[2px] shrink-0" />
            <VGrip />
            <VToolbar tools={modifyTools} />
          </div>
        </div>

        {/* command window */}
        <div className="h-[80px] shrink-0 flex bg-[#d0d4dd]">
          <div className="w-[20px] shrink-0 flex flex-col items-center pt-[4px] gap-[8px] bg-[#d0d4dd]">
            <span className={`${sans} text-[13px] leading-[14px] font-bold text-[#222]`}>✕</span>
            <div className="w-0 h-0 border-x-[4px] border-x-transparent border-t-[5px] border-t-black" />
          </div>
          <div className="flex-1 min-w-0 flex flex-col border-l border-t border-[#777] bg-white">
            <div className="h-[58px] shrink-0 flex border-b border-[#666]">
              <div className="flex-1 min-w-0 pl-[2px] pt-[4px] overflow-hidden font-['Liberation_Mono','Noto_Sans_CJK_SC',monospace] text-[11.600px] leading-[14px] text-black whitespace-pre">
                <CmdLine to="Layout2" />
                <div className="h-[14px]">Using config file</div>
                <CmdLine to="Layout1" />
                <CmdLine to="Model" />
              </div>
              <div className="w-[17px] shrink-0 flex flex-col items-center justify-between py-[9px] bg-[#f0f0f0]">
                <div className="w-0 h-0 border-x-[4px] border-x-transparent border-b-[4px] border-b-[#333]" />
                <div className="w-[14px] h-[15px] mb-[3px] rounded-[2px] border border-[#999] bg-gradient-to-r from-[#f4f4f4] to-[#d4d4d4]" />
                <div className="w-0 h-0 border-x-[4px] border-x-transparent border-t-[4px] border-t-[#333]" />
              </div>
            </div>
            <div className="h-[19px] shrink-0 pl-[2px] text-[16px] leading-[20px] font-bold text-black">命令:</div>
          </div>
        </div>

        {/* status bar */}
        <div className="h-[26px] shrink-0 flex items-center text-[12px] text-[#444] bg-gradient-to-b from-[#cdd0d9] to-[#bfc2cc]">
          <div className="w-[521px] shrink-0 pl-[4px] border-r border-[#aeb2bc] h-full flex items-center">就绪</div>
          <div className={`w-[135px] shrink-0 pl-[13px] border-r border-[#aeb2bc] h-full flex items-center text-[11px] ${sans}`}>0,0,0</div>
          <Cell w="w-[48px]"><span className={`${sans} text-[11.500px] text-[#333]`}>OpenGL</span></Cell>
          <Cell w="w-[41px]"><Icon name="ucs" size={18} /><span className={`${sans} ml-[5px] text-[11px] text-[#222]`}>1:1</span></Cell>
          <Cell w="w-[22px]"><Icon name="ucsL" /></Cell>
          <Cell w="w-[22px]"><Icon name="ucsP" /></Cell>
          <Cell w="w-[22px]"><Icon name="snapg" /></Cell>
          <Cell w="w-[22px]"><Icon name="grid" /></Cell>
          <Cell w="w-[22px]"><Icon name="ortho" /></Cell>
          <Cell w="w-[22px]"><Icon name="polar" /></Cell>
          <Cell w="w-[23px]"><Icon name="otrack" /></Cell>
          <Cell w="w-[21px]"><Icon name="angle" /></Cell>
          <Cell w="w-[23px]"><Icon name="cross" /></Cell>
          <Cell w="w-[42px]"><span className={`${sans} text-[11.500px] text-[#223]`}>MODEL</span></Cell>
          <Cell w="w-[55px]"><span className="text-[12px] text-[#888]">数字化仪</span></Cell>
          <Cell w="w-[22px]"><Icon name="gear" /></Cell>
          <Cell w="w-[22px]"><Icon name="panes" /></Cell>
          <Cell w="w-[23px]"><Icon name="compass" /></Cell>
          <Cell w="w-[28px]"><Icon name="ok" /></Cell>
          <div className="flex-1 flex justify-end items-end h-full pr-[2px] pb-[2px]">
            <svg width="12" height="12" viewBox="0 0 12 12"><path d="M10 2h2v2h-2zM6 6h2v2H6zM10 6h2v2h-2zM2 10h2v2H2zM6 10h2v2H6zM10 10h2v2h-2z" fill="#8a8e98" /></svg>
          </div>
        </div>
      </div>
      <div className="h-[6px] shrink-0 bg-gradient-to-r from-[#3a4048] via-[#3a3a36] to-[#2e2e2c]" />

      {/* red annotation overlays */}
      <div className="absolute left-[10px] top-[29px] w-[1153px] h-[84px] border-[3px] border-[#f43c3c] pointer-events-none" />
      <div className="absolute left-[6px] top-[132px] w-[54px] h-[559px] border-[3px] border-[#f43c3c] pointer-events-none" />
      <div className="absolute left-[1080px] top-[110px] w-[86px] h-[650px] border-[3px] border-[#f43c3c] pointer-events-none" />
      <div className="absolute left-[667px] top-[765px] w-[496px] h-[31px] border-[3px] border-[#f43c3c] pointer-events-none" />
      <svg width="175" height="50" viewBox="0 0 175 50" className="absolute left-[90px] top-[710px] pointer-events-none">
        <path d="M6 43l16-12 5 4L170 6 35 42l-12 5z" fill="#f43c3c" />
      </svg>
    </div>
  );
}
